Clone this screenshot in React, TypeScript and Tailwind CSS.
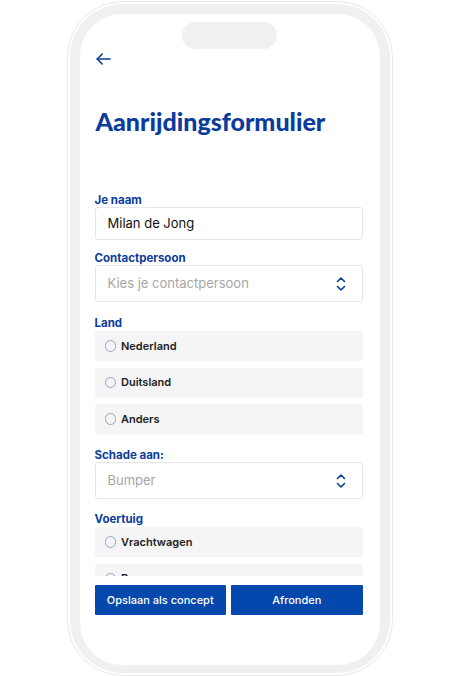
import { useState } from "react";

type Option = { value: string; label: string };

const landen: Option[] = [
  { value: "nl", label: "Nederland" },
  { value: "de", label: "Duitsland" },
  { value: "other", label: "Anders" },
];

const voertuigen: Option[] = [
  { value: "truck", label: "Vrachtwagen" },
  { value: "bus", label: "Bus" },
  { value: "car", label: "Auto" },
];

function BackArrow() {
  return (
    <svg width="15" height="12" viewBox="0 0 15 12" fill="none" stroke="#0b3c9c" strokeWidth="1.6" strokeLinecap="round" strokeLinejoin="round">
      <path d="M14 6H1.2" />
      <path d="M6.2 1L1.2 6l5 5" />
    </svg>
  );
}

function UpDown() {
  return (
    <svg width="10" height="16" viewBox="0 0 10 16" fill="none" stroke="#0b3c9c" strokeWidth="1.6" strokeLinecap="round" strokeLinejoin="round">
      <path d="M1.5 5.5L5 2l3.5 3.5" />
      <path d="M1.5 10.5L5 14l3.5-3.5" />
    </svg>
  );
}

function Label({ children, className = "" }: { children: React.ReactNode; className?: string }) {
  return <div className={`text-[11.5px] leading-[14px] font-bold text-[#0b3c9c] ${className}`}>{children}</div>;
}

function SelectBox({ placeholder }: { placeholder: string }) {
  return (
    <div className="flex h-[37px] items-center justify-between rounded-[3px] border border-[#e6e6e6] bg-white pl-[12px] pr-[16px]">
      <span className="text-[13px] text-[#a6a6a6]">{placeholder}</span>
      <UpDown />
    </div>
  );
}

function RadioGroup({ options, value, onChange }: { options: Option[]; value: string | null; onChange: (v: string) => void }) {
  return (
    <div className="flex flex-col gap-[6.5px]">
      {options.map((opt) => (
        <button
          key={opt.value}
          type="button"
          onClick={() => onChange(opt.value)}
          className="flex h-[30px] shrink-0 items-center gap-[5px] rounded-[2px] bg-[#f5f5f5] pl-[10px] text-left"
        >
          <span className="flex h-[11.5px] w-[11.5px] items-center justify-center rounded-full border-[1.3px] border-[#93a7ca]">
            {value === opt.value && <span className="h-[5px] w-[5px] rounded-full bg-[#0b3c9c]" />}
          </span>
          <span className="text-[11px] font-semibold text-[#222222]">{opt.label}</span>
        </button>
      ))}
    </div>
  );
}

export default function App() {
  const [land, setLand] = useState<string | null>(null);
  const [voertuig, setVoertuig] = useState<string | null>(null);

  return (
    <div className="min-h-[676px] bg-white pt-[1px]" style={{ fontFamily: "Inter, 'Liberation Sans', sans-serif" }}>
      <div className="mx-auto h-[675px] w-[326px] rounded-[56px] border border-[#e8e8e8] p-[2px]">
        <div className="h-full rounded-[53px] bg-[#f0f0f0] px-[10px] pt-[10px] pb-[8px]">
          <div className="flex h-full flex-col rounded-[42px] bg-white">
            <div className="h-[562px] overflow-hidden">
              <div className="mx-auto mt-[8px] h-[27px] w-[95px] rounded-full bg-[#f0f0f0]" />
              <div className="ml-[16px] mt-[4px] h-[12px]">
                <BackArrow />
              </div>
              <h1
                className="ml-[16px] mt-[40px] text-[25px] leading-[32px] font-black text-[#0b3c9c]"
                style={{ fontFamily: "Lato, sans-serif" }}
              >
                Aanrijdingsformulier
              </h1>

              <div className="ml-[15px] w-[268px]">
                <Label className="mt-[56px]">Je naam</Label>
                <div className="flex h-[33px] items-center rounded-[3px] border border-[#e6e6e6] pl-[12px] text-[13px] text-[#111111]">
                  Milan de Jong
                </div>

                <Label className="mt-[11px]">Contactpersoon</Label>
                <SelectBox placeholder="Kies je contactpersoon" />

                <Label className="mt-[14px] mb-[1px]">Land</Label>
                <RadioGroup options={landen} value={land} onChange={setLand} />

                <Label className="mt-[14px]">Schade aan:</Label>
                <SelectBox placeholder="Bumper" />

                <Label className="mt-[13px] mb-[1px]">Voertuig</Label>
                <RadioGroup options={voertuigen} value={voertuig} onChange={setVoertuig} />
              </div>
            </div>

            <div className="ml-[15px] mt-[9px] flex w-[268px] gap-[5px]">
              <button type="button" className="h-[30px] flex-1 rounded-[1px] bg-[#0548ad] text-[11px] font-medium text-white">
                Opslaan als concept
              </button>
              <button type="button" className="h-[30px] flex-1 rounded-[1px] bg-[#0548ad] text-[11px] font-medium text-white">
                Afronden
              </button>
            </div>
          </div>
        </div>
      </div>
    </div>
  );
}
